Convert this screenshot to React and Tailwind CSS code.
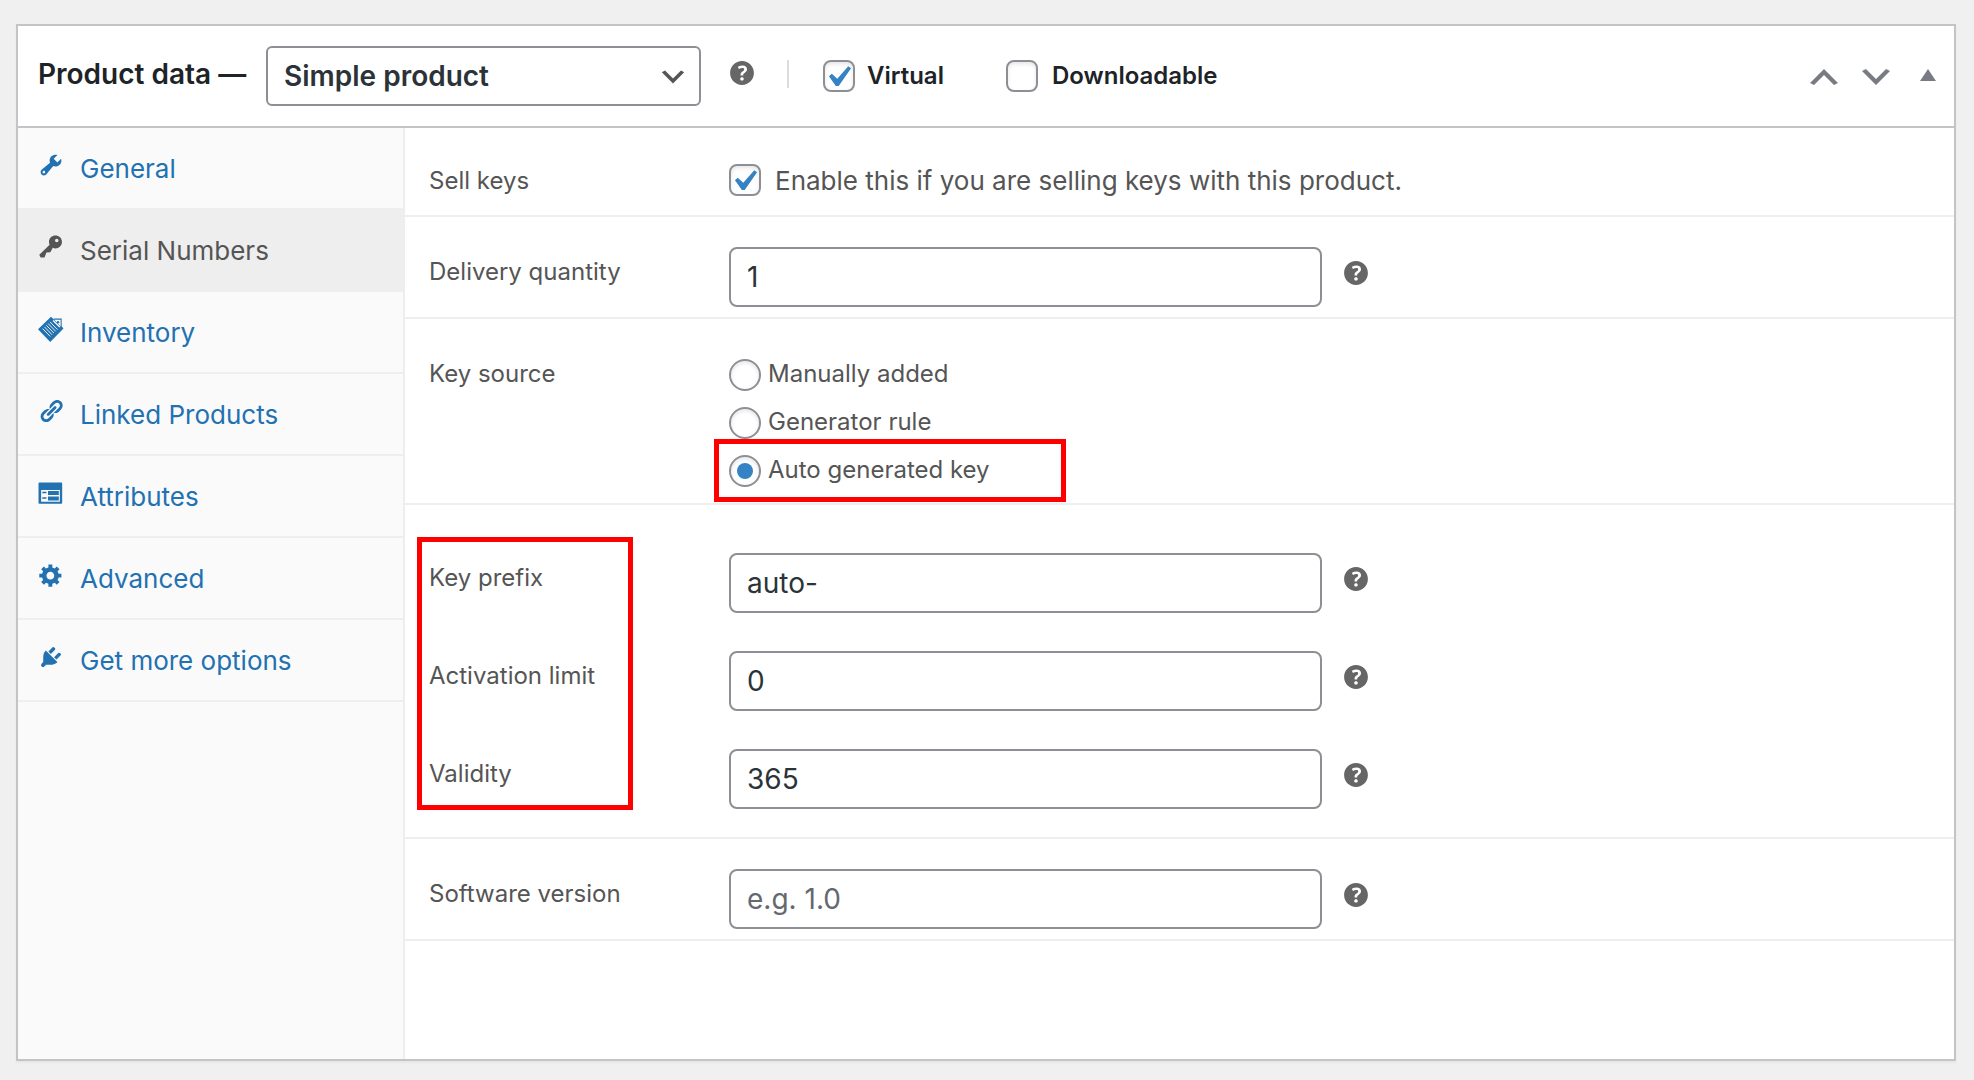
import { useState } from "react";

const ICONS = {
  wrench: (
    <path d="M16.68 9.77c-1.34 1.34-3.3 1.67-4.95.99l-5.41 6.52c-.99.99-2.59.99-3.58 0s-.99-2.59 0-3.57l6.52-5.42c-.68-1.65-.35-3.61.99-4.95 1.28-1.28 3.12-1.62 4.72-1.06l-2.89 2.89 2.82 2.82 2.86-2.87c.53 1.58.18 3.39-1.08 4.65zM3.81 16.21c.4.39 1.04.39 1.43 0 .4-.4.4-1.04 0-1.43-.39-.4-1.03-.4-1.43 0-.39.39-.39 1.03 0 1.43z" />
  ),
  key: (
    <path d="M16.95 2.58c1.96 1.95 1.96 5.12 0 7.07-1.51 1.51-3.75 1.84-5.59 1.01l-1.87 3.31-2.99.31L5 18H2l-1-2 7.95-7.69c-.92-1.87-.62-4.18.93-5.73 1.95-1.96 5.12-1.96 7.07 0zm-2.51 3.79c.74 0 1.33-.6 1.33-1.34 0-.73-.59-1.33-1.33-1.33-.73 0-1.33.6-1.33 1.33 0 .74.6 1.34 1.33 1.34z" />
  ),
  inventory: (
    <>
      <path d="M0 10.2L10 .6l1.6 1.5 6.4 5.6 1.6 2-10.2 10.3z" />
      <path d="M12 2.4h5.8v5.8" fill="#fafafa" stroke="currentColor" strokeWidth=".8" />
      <path d="M11.6 3.4l5.2 5" stroke="#fafafa" strokeWidth="1" />
      <circle cx="15.4" cy="4.8" r=".9" />
      <path
        d="M3.6 9.7l5.8 6M5 8.4l5.8 6M6.4 7.1l5.8 6M7.8 5.8l5.8 6M9.2 4.5l5.8 6"
        fill="none"
        stroke="#fafafa"
        strokeWidth=".7"
      />
    </>
  ),
  link: (
    <path d="M17.74 2.76c1.68 1.69 1.68 4.41 0 6.1l-1.53 1.52c-1.12 1.12-2.7 1.47-4.14 1.09l2.62-2.61.76-.77.76-.76c.84-.84.84-2.2 0-3.04-.84-.85-2.2-.85-3.04 0l-.77.76-3.38 3.38c-.37-1.44-.02-3.02 1.1-4.14l1.52-1.53c1.69-1.68 4.42-1.68 6.1 0zM8.59 13.43l5.34-5.34c.42-.42.42-1.1 0-1.52-.44-.43-1.13-.39-1.53 0l-5.33 5.34c-.42.42-.42 1.1 0 1.52.44.43 1.13.39 1.52 0zm-.76 2.29l4.14-4.15c.38 1.44.03 3.02-1.09 4.14l-1.52 1.53c-1.69 1.68-4.41 1.68-6.1 0-1.68-1.68-1.68-4.42 0-6.1l1.53-1.52c1.12-1.12 2.7-1.47 4.14-1.1l-4.14 4.15c-.85.84-.85 2.2 0 3.05.84.84 2.2.84 3.04 0z" />
  ),
  form: (
    <path
      fillRule="evenodd"
      d="M1 2h17c.3 0 .6.3.6.6v15c0 .3-.3.6-.6.6H1c-.3 0-.6-.3-.6-.6v-15c0-.3.3-.6.6-.6zM2.4 7.6v9.2h14.4V7.6zM3.3 9h3.2v1.2H3.3zM7.7 8.5H16v3.1H7.7zM3.3 13.2h3.2v1.2H3.3zM7.7 12.7H16v3.1H7.7z"
    />
  ),
  gear: (
    <path d="M18 12h-2.18c-.17.7-.44 1.35-.81 1.93l1.54 1.54-2.1 2.1-1.54-1.54c-.58.36-1.23.63-1.91.79V19H8v-2.18c-.68-.16-1.33-.43-1.91-.79l-1.54 1.54-2.12-2.12 1.54-1.54c-.36-.58-.63-1.23-.79-1.91H1V9.03h2.17c.16-.7.44-1.35.8-1.94L2.43 5.55l2.1-2.1 1.54 1.54c.58-.37 1.24-.64 1.93-.81V2h3v2.18c.68.16 1.33.43 1.91.79l1.54-1.54 2.12 2.12-1.54 1.54c.36.59.64 1.24.8 1.94H18V12zm-8.5 1.5c1.66 0 3-1.34 3-3s-1.34-3-3-3-3 1.34-3 3 1.34 3 3 3z" />
  ),
  plug: (
    <path d="M13.11 4.36L9.87 7.6 8 5.73l3.24-3.24c.35-.34 1.05-.2 1.56.32.52.51.66 1.21.31 1.55zm-8 1.77l.91-1.12 9.01 9.01-1.19.84c-.71.71-2.63 1.16-3.82 1.16H6.14L4.9 17.26c-.59.59-1.54.59-2.12 0-.59-.58-.59-1.53 0-2.12l1.24-1.24v-3.88c0-1.13.4-3.19 1.09-3.89zm7.26 3.97l3.24-3.24c.34-.35 1.04-.21 1.55.31.52.51.66 1.21.31 1.55l-3.24 3.25z" />
  ),
};

const TABS = [
  { id: "general", label: "General", icon: "wrench" },
  { id: "serials", label: "Serial Numbers", icon: "key" },
  { id: "inventory", label: "Inventory", icon: "inventory" },
  { id: "linked", label: "Linked Products", icon: "link" },
  { id: "attributes", label: "Attributes", icon: "form" },
  { id: "advanced", label: "Advanced", icon: "gear" },
  { id: "more", label: "Get more options", icon: "plug" },
];

const SOURCES = [
  { id: "manual", label: "Manually added" },
  { id: "rule", label: "Generator rule" },
  { id: "auto", label: "Auto generated key" },
];

function HelpTip() {
  return (
    <button type="button" aria-label="Help" className="block shrink-0 text-[#666666]">
      <svg viewBox="0 0 20 20" fill="currentColor" className="block size-[34px]">
        <path d="M17 10c0-3.87-3.14-7-7-7-3.87 0-7 3.13-7 7s3.13 7 7 7c3.86 0 7-3.13 7-7zm-6.3 1.48H9.14v-.43c0-.38.08-.7.24-.98s.46-.57.88-.89c.41-.29.68-.53.81-.71.14-.18.2-.39.2-.62 0-.25-.09-.44-.28-.58-.19-.13-.45-.19-.79-.19-.58 0-1.25.19-2 .57l-.64-1.28c.87-.49 1.8-.74 2.77-.74.81 0 1.45.2 1.92.58.48.39.71.91.71 1.55 0 .43-.09.8-.29 1.11-.19.32-.57.67-1.11 1.06-.38.28-.61.49-.71.63-.1.15-.15.34-.15.57v.35zm-1.47 2.74c-.18-.17-.27-.42-.27-.73 0-.33.08-.58.26-.75s.43-.25.77-.25c.32 0 .57.09.75.26s.27.42.27.74c0 .3-.09.55-.27.72-.18.18-.43.27-.75.27-.33 0-.58-.09-.76-.26z" />
      </svg>
    </button>
  );
}

function Checkbox({ id, defaultChecked }) {
  return (
    <span className="relative size-8 shrink-0">
      <input
        id={id}
        type="checkbox"
        defaultChecked={defaultChecked}
        className="peer block size-8 appearance-none rounded-lg border-2 border-[#8c8f94] bg-white shadow-[inset_0_2px_4px_rgba(0,0,0,0.1)]"
      />
      <svg viewBox="3 2 15 15" className="pointer-events-none absolute inset-0 hidden size-8 peer-checked:block">
        <path d="M14.83 4.89l1.34.94-5.81 8.38H9.02L5.78 9.67l1.34-1.25 2.57 2.4z" fill="#3582c4" />
      </svg>
    </span>
  );
}

function Field({ id, label, defaultValue, placeholder }) {
  return (
    <div className="flex items-start pr-6 pl-6">
      <label htmlFor={id} className="w-[300px] shrink-0 text-2xl leading-[50px]">{label}</label>
      <input
        id={id}
        type="text"
        defaultValue={defaultValue}
        placeholder={placeholder}
        className="h-[60px] w-full max-w-[593px] min-w-0 rounded-lg border-2 border-[#8c8f94] bg-white px-4 text-[28px] text-[#2c3338] placeholder:text-[#646970]"
      />
      <span className="mt-[9px] ml-[17px]">
        <HelpTip />
      </span>
    </div>
  );
}

export default function App() {
  const [tab, setTab] = useState("serials");
  const [source, setSource] = useState("auto");

  return (
    <div className="flex min-h-screen flex-col bg-[#f0f0f1] pt-6 pr-[18px] pb-[19px] pl-4 font-['Inter',sans-serif] text-[#555555]">
      <section className="flex flex-1 flex-col border-2 border-[#c3c4c7] bg-white shadow-[0_2px_2px_rgba(0,0,0,0.04)]">
        <header className="flex h-[102px] items-center border-b-2 border-[#c3c4c7] pr-[18px] pl-5 text-[#1d2327]">
          <label htmlFor="product-type" className="w-[228px] shrink-0 pb-1 text-[28px] font-semibold">Product data —</label>
          <div className="relative w-[435px]">
            <select
              id="product-type"
              className="block h-[60px] w-full appearance-none rounded-md border-2 border-[#8c8f94] bg-white pr-12 pl-4 text-[28px] font-semibold text-[#2c3338]"
            >
              <option>Simple product</option>
              <option>Grouped product</option>
              <option>Variable product</option>
            </select>
            <svg viewBox="0 0 20 20" className="pointer-events-none absolute top-[15px] right-3 size-8">
              <path d="M5 6l5 5 5-5 2 1-7 7-7-7 2-1z" fill="#555" />
            </svg>
          </div>
          <span className="ml-6 pb-1.5">
            <HelpTip />
          </span>
          <span className="mr-[34px] mb-1 ml-7 h-7 w-0.5 bg-[#dcdcde]" />
          <Checkbox id="virtual" defaultChecked />
          <label htmlFor="virtual" className="w-[151px] pl-3 text-2xl font-semibold">Virtual</label>
          <Checkbox id="downloadable" />
          <label htmlFor="downloadable" className="pl-3.5 text-2xl font-semibold">Downloadable</label>
          <div className="ml-auto flex items-center gap-6 pt-0.5 text-[#787c82]">
            <button type="button" aria-label="Move up">
              <svg viewBox="3 6 14 8" fill="currentColor" className="block h-4 w-7">
                <path d="M15 14l-5-5-5 5-2-1 7-7 7 7z" />
              </svg>
            </button>
            <button type="button" aria-label="Move down">
              <svg viewBox="3 6 14 8" fill="currentColor" className="block h-4 w-7">
                <path d="M5 6l5 5 5-5 2 1-7 7-7-7z" />
              </svg>
            </button>
            <button type="button" aria-label="Toggle panel" className="ml-1.5 pb-1">
              <svg viewBox="0 0 16 12" fill="currentColor" className="block h-3 w-4">
                <path d="M8 0l8 12H0z" />
              </svg>
            </button>
          </div>
        </header>

        <div className="flex flex-1">
          <nav className="w-[387px] shrink-0 border-r-2 border-[#eeeeee] bg-[#fafafa] text-[26px]">
            {TABS.map((t) => (
              <a
                key={t.id}
                href={`#${t.id}`}
                onClick={() => setTab(t.id)}
                className={`flex h-[82px] items-center gap-4 border-b-2 border-[#eeeeee] pl-5 ${
                  tab === t.id ? "bg-[#eeeeee] text-[#555555]" : "text-[#2271b1]"
                }`}
              >
                <svg viewBox="0 0 20 20" fill="currentColor" className="mb-1.5 size-[26px]">
                  {ICONS[t.icon]}
                </svg>
                {t.label}
              </a>
            ))}
          </nav>

          <form className="flex-1">
            <div className="flex items-center border-b-2 border-[#eeeeee] pt-9 pb-[19px] pl-6">
              <label htmlFor="sell-keys" className="w-[300px] shrink-0 pt-0.5 text-2xl leading-[30px]">Sell keys</label>
              <Checkbox id="sell-keys" defaultChecked />
              <label htmlFor="sell-keys" className="pt-0.5 pl-3.5 text-[26px] leading-[30px]">
                Enable this if you are selling keys with this product.
              </label>
            </div>

            <div className="border-b-2 border-[#eeeeee] pt-[30px] pb-2.5">
              <Field id="quantity" label="Delivery quantity" defaultValue="1" />
            </div>

            <div
              role="radiogroup"
              aria-labelledby="source-label"
              className="flex items-start border-b-2 border-[#eeeeee] pt-8 pb-2 pl-6 text-2xl"
            >
              <span id="source-label" className="w-[300px] shrink-0 leading-[46px]">Key source</span>
              <div>
                {SOURCES.map((s) => (
                  <div key={s.id} className="relative flex h-12 items-center">
                    <input
                      id={s.id}
                      type="radio"
                      name="source"
                      checked={source === s.id}
                      onChange={() => setSource(s.id)}
                      className="flex size-8 appearance-none items-center justify-center rounded-full border-2 border-[#8c8f94] bg-white shadow-[inset_0_2px_4px_rgba(0,0,0,0.1)] before:size-4 before:rounded-full checked:before:bg-[#3582c4]"
                    />
                    <label htmlFor={s.id} className="pb-0.5 pl-[7px]">{s.label}</label>
                    {s.id === "auto" && (
                      <span className="pointer-events-none absolute -top-2 -left-[15px] h-[63px] w-[352px] border-[5px] border-[#ff0000]" />
                    )}
                  </div>
                ))}
              </div>
            </div>

            <div className="relative flex flex-col gap-[38px] border-b-2 border-[#eeeeee] pt-12 pb-7">
              <Field id="prefix" label="Key prefix" defaultValue="auto-" />
              <Field id="limit" label="Activation limit" defaultValue="0" />
              <Field id="validity" label="Validity" defaultValue="365" />
              <span className="pointer-events-none absolute top-8 left-3 h-[273px] w-[216px] border-[5px] border-[#ff0000]" />
            </div>

            <div className="border-b-2 border-[#eeeeee] pt-[30px] pb-2.5">
              <Field id="version" label="Software version" placeholder="e.g. 1.0" />
            </div>
          </form>
        </div>
      </section>
    </div>
  );
}
